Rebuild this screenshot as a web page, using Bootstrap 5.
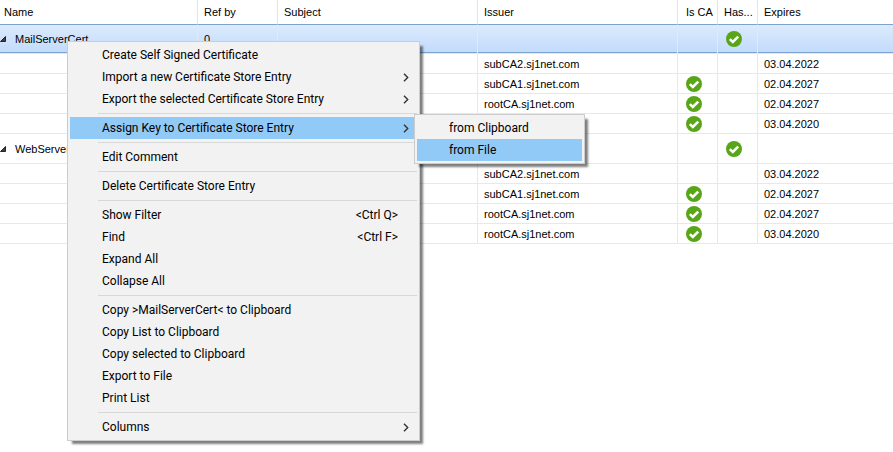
<!DOCTYPE html>
<html lang="en">
<head>
<meta charset="utf-8">
<meta name="viewport" content="width=device-width, initial-scale=1">
<title>Certificate Store</title>
<link href="https://cdn.jsdelivr.net/npm/bootstrap@5.3.0/dist/css/bootstrap.min.css" rel="stylesheet">
<style>
body{background:#fff;color:#000;font-family:"Liberation Sans",Arial,sans-serif;font-size:11px;line-height:16px}
.cert-table{table-layout:fixed;border-collapse:separate;border-spacing:0;color:#000;--bs-table-color:#000;--bs-table-bg:transparent}
.cert-table>:not(caption)>*>*{height:20px;padding:0 6px;border:0 solid #ebe9dc;border-width:0 1px 1px 0;vertical-align:middle;white-space:nowrap;overflow:hidden}
.cert-table>thead>tr>th{height:24px;font-weight:400;border-color:#e5e5e5;border-bottom:0}
.cert-table>*>tr>:first-child{padding-left:4px}
.cert-table>*>tr>:last-child{border-right:0}
.cert-table>tbody>tr.parent-row>td{height:30px}
.cert-table>tbody>tr.parent-row>td:first-child{padding-left:0}
.cert-table>tbody>tr.active-row>td{border-top:1px solid #7da2ce;background:linear-gradient(#dceafc,#c1dbfc);box-shadow:inset 0 -1px #7da2ce}
.cert-table>*>tr>.ca-col{padding-left:8px}
.cert-table>tbody>tr>.key-col{padding-left:8px}
.w-name{width:198px}.w-ref{width:80px}.w-text{width:200px}.w-flag{width:40px}
.twist{border:0;background:none;padding:0;width:15px;height:16px}
.ctx-menu{--bs-dropdown-min-width:0;--bs-dropdown-bg:#f2f2f2;--bs-dropdown-border-color:#ccc;--bs-dropdown-border-radius:0;--bs-dropdown-padding-x:2px;--bs-dropdown-padding-y:2px;--bs-dropdown-divider-bg:#d7d7d7;--bs-dropdown-divider-margin-y:3px;--bs-dropdown-item-padding-x:0px;--bs-dropdown-item-padding-y:0px;--bs-dropdown-link-color:#000;--bs-dropdown-link-hover-color:#000;--bs-dropdown-link-hover-bg:#91c9f7;--bs-dropdown-link-active-color:#000;--bs-dropdown-link-active-bg:#91c9f7;--bs-dropdown-font-size:12px;font-family:Roboto,"Open Sans",sans-serif;box-shadow:4px 4px 2px -1px rgba(0,0,0,.5)}
.main-menu{left:67px;top:41px;width:353px}
.sub-menu{left:calc(100% - 3px);top:-3px;width:171px}
.ctx-menu .dropdown-item{height:22px;line-height:22px;padding:0 8px 0 32px}
.ctx-menu .dropdown-divider{margin-left:28px}
.keys{margin-right:11px}
</style>
<script src="https://cdn.jsdelivr.net/npm/bootstrap@5.3.0/dist/js/bootstrap.bundle.min.js"></script>
</head>
<body>
<svg class="d-none" aria-hidden="true">
<symbol id="tick" viewBox="0 0 16 16"><circle cx="8" cy="8" r="8" fill="#58a618"/><path d="M3.8 8.2 6.8 11 12.2 5.6" fill="none" stroke="#fff" stroke-width="2.5"/></symbol>
<symbol id="tri" viewBox="0 0 6 6"><path d="M5.5.5v5H.5z" fill="#404040" stroke="#262626"/></symbol>
<symbol id="arrow" viewBox="0 0 6 9"><path d="M1 .8 4.7 4.5 1 8.2" fill="none" stroke="#333" stroke-width="1.4"/></symbol>
</svg>
<main class="position-relative min-vh-100">
<table class="table cert-table w-100 mb-0">
<colgroup><col class="w-name"><col class="w-ref"><col class="w-text"><col class="w-text"><col class="w-flag"><col class="w-flag"><col></colgroup>
<thead><tr><th>Name</th><th>Ref by</th><th>Subject</th><th>Issuer</th><th class="ca-col">Is CA</th><th>Has...</th><th>Expires</th></tr></thead>
<tbody>
<tr class="parent-row active-row"><td><div class="d-flex align-items-center"><button class="twist d-flex align-items-center" type="button" aria-label="Collapse MailServerCert"><svg width="6" height="6"><use href="#tri"/></svg></button>MailServerCert</div></td><td>0</td><td></td><td></td><td></td><td class="key-col"><svg class="d-block" width="16" height="16" role="img" aria-label="Yes"><use href="#tick"/></svg></td><td></td></tr>
<tr><td></td><td></td><td></td><td>subCA2.sj1net.com</td><td></td><td></td><td>03.04.2022</td></tr>
<tr><td></td><td></td><td></td><td>subCA1.sj1net.com</td><td class="ca-col"><svg class="d-block" width="16" height="16" role="img" aria-label="Yes"><use href="#tick"/></svg></td><td></td><td>02.04.2027</td></tr>
<tr><td></td><td></td><td></td><td>rootCA.sj1net.com</td><td class="ca-col"><svg class="d-block" width="16" height="16" role="img" aria-label="Yes"><use href="#tick"/></svg></td><td></td><td>02.04.2027</td></tr>
<tr><td></td><td></td><td></td><td></td><td class="ca-col"><svg class="d-block" width="16" height="16" role="img" aria-label="Yes"><use href="#tick"/></svg></td><td></td><td>03.04.2020</td></tr>
<tr class="parent-row"><td><div class="d-flex align-items-center"><button class="twist d-flex align-items-center" type="button" aria-label="Collapse WebServer"><svg width="6" height="6"><use href="#tri"/></svg></button>WebServer</div></td><td></td><td></td><td></td><td></td><td class="key-col"><svg class="d-block" width="16" height="16" role="img" aria-label="Yes"><use href="#tick"/></svg></td><td></td></tr>
<tr><td></td><td></td><td></td><td>subCA2.sj1net.com</td><td></td><td></td><td>03.04.2022</td></tr>
<tr><td></td><td></td><td></td><td>subCA1.sj1net.com</td><td class="ca-col"><svg class="d-block" width="16" height="16" role="img" aria-label="Yes"><use href="#tick"/></svg></td><td></td><td>02.04.2027</td></tr>
<tr><td></td><td></td><td></td><td>rootCA.sj1net.com</td><td class="ca-col"><svg class="d-block" width="16" height="16" role="img" aria-label="Yes"><use href="#tick"/></svg></td><td></td><td>02.04.2027</td></tr>
<tr><td></td><td></td><td></td><td>rootCA.sj1net.com</td><td class="ca-col"><svg class="d-block" width="16" height="16" role="img" aria-label="Yes"><use href="#tick"/></svg></td><td></td><td>03.04.2020</td></tr>
</tbody>
</table>
<ul class="dropdown-menu show ctx-menu main-menu">
<li><button type="button" class="dropdown-item">Create Self Signed Certificate</button></li>
<li><button type="button" class="dropdown-item d-flex justify-content-between align-items-center">Import a new Certificate Store Entry<svg width="6" height="9"><use href="#arrow"/></svg></button></li>
<li><button type="button" class="dropdown-item d-flex justify-content-between align-items-center">Export the selected Certificate Store Entry<svg width="6" height="9"><use href="#arrow"/></svg></button></li>
<li><hr class="dropdown-divider"></li>
<li class="position-relative"><button type="button" class="dropdown-item active d-flex justify-content-between align-items-center" aria-expanded="true">Assign Key to Certificate Store Entry<svg width="6" height="9"><use href="#arrow"/></svg></button>
<ul class="dropdown-menu show ctx-menu sub-menu">
<li><button type="button" class="dropdown-item">from Clipboard</button></li>
<li><button type="button" class="dropdown-item active">from File</button></li>
</ul></li>
<li><hr class="dropdown-divider"></li>
<li><button type="button" class="dropdown-item">Edit Comment</button></li>
<li><hr class="dropdown-divider"></li>
<li><button type="button" class="dropdown-item">Delete Certificate Store Entry</button></li>
<li><hr class="dropdown-divider"></li>
<li><button type="button" class="dropdown-item d-flex justify-content-between">Show Filter<span class="keys">&lt;Ctrl Q&gt;</span></button></li>
<li><button type="button" class="dropdown-item d-flex justify-content-between">Find<span class="keys">&lt;Ctrl F&gt;</span></button></li>
<li><button type="button" class="dropdown-item">Expand All</button></li>
<li><button type="button" class="dropdown-item">Collapse All</button></li>
<li><hr class="dropdown-divider"></li>
<li><button type="button" class="dropdown-item">Copy &gt;MailServerCert&lt; to Clipboard</button></li>
<li><button type="button" class="dropdown-item">Copy List to Clipboard</button></li>
<li><button type="button" class="dropdown-item">Copy selected to Clipboard</button></li>
<li><button type="button" class="dropdown-item">Export to File</button></li>
<li><button type="button" class="dropdown-item">Print List</button></li>
<li><hr class="dropdown-divider"></li>
<li><button type="button" class="dropdown-item d-flex justify-content-between align-items-center">Columns<svg width="6" height="9"><use href="#arrow"/></svg></button></li>
</ul>
</main>
</body>
</html>
